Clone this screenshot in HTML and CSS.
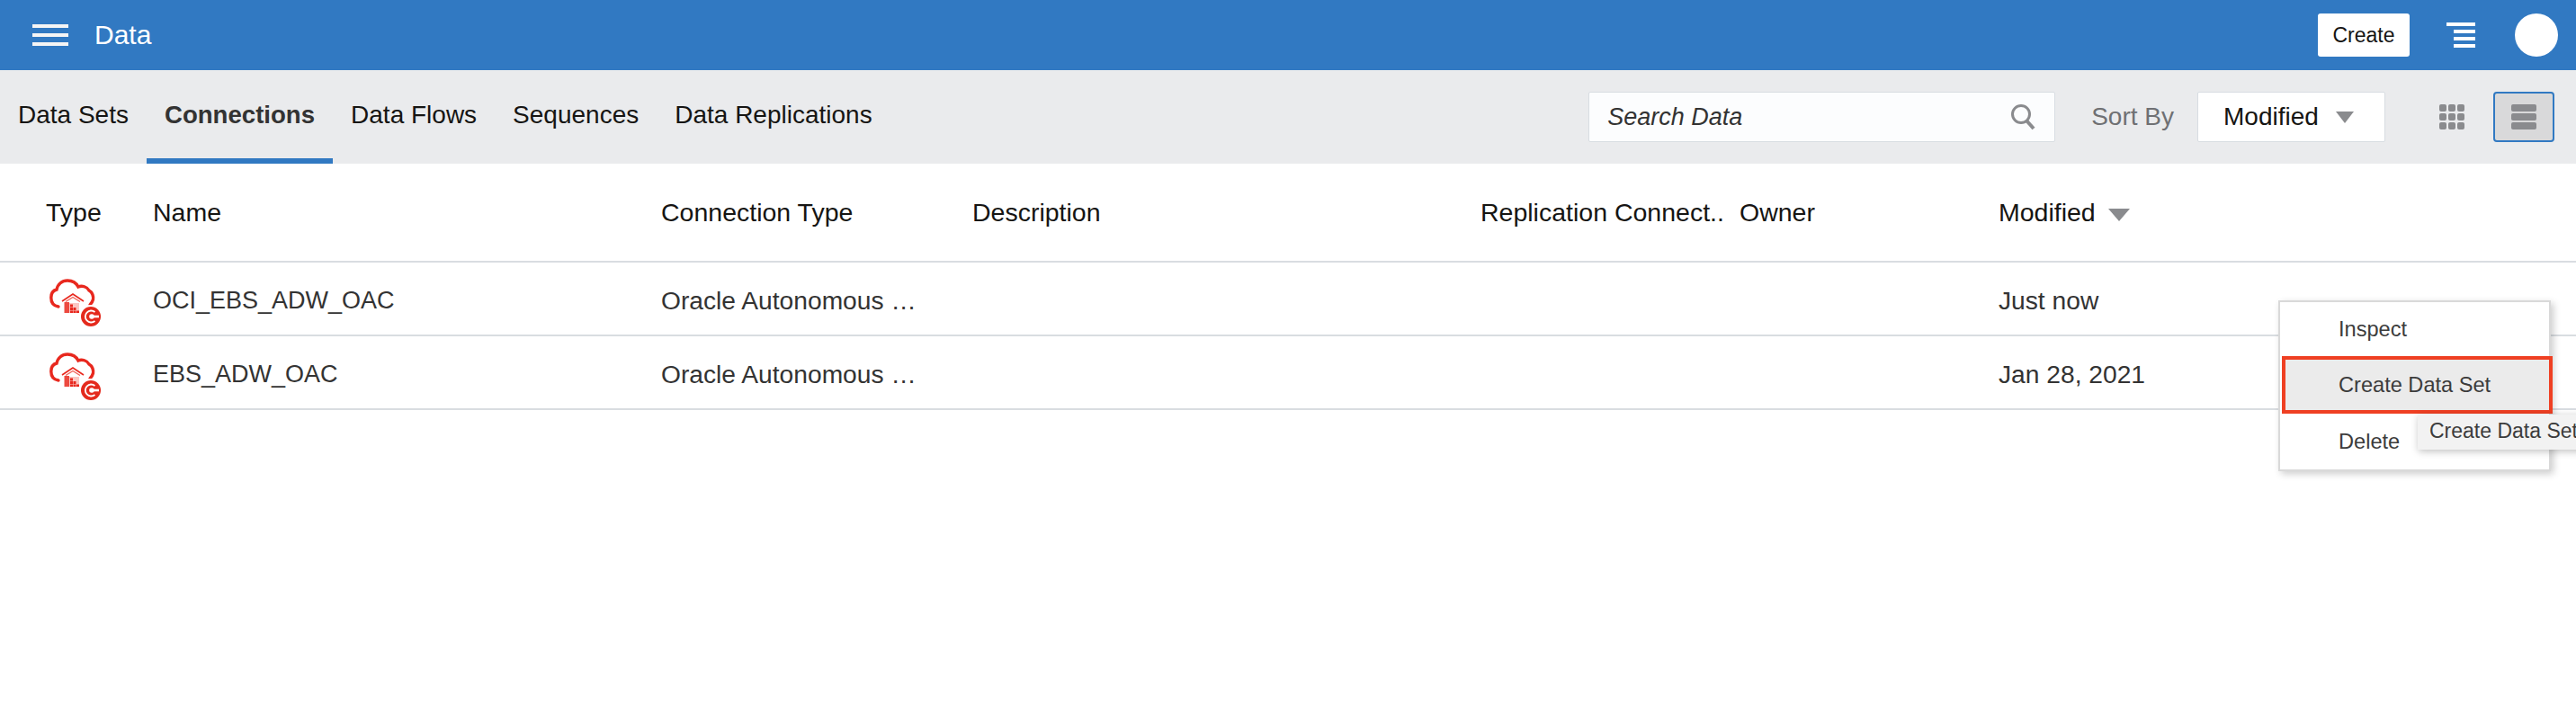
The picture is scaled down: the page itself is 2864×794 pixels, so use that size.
FILE: index.html
```html
<!DOCTYPE html>
<html>
<head>
  <title>Data</title>
  <link rel="stylesheet" href="styles.css">
</head>
<body>
  <svg class="defs" width="0" height="0">
    <symbol id="conn" viewBox="0 0 58 56">
      <path d="M10 31C4 30 1.800 26 1.800 21C1.800 16 4 13 8 12C9 6 14 2 20 2C26 2 30 5 32 9C36 7 42 9 44 13C48 15 49 20 48.500 23C48 25 47 27 45 29" fill="none" stroke="#e8281e" stroke-width="3.400" stroke-linecap="round"/>
      <path d="M14 25L26 17L38 25" fill="none" stroke="#e8281e" stroke-width="1.600"/>
      <path d="M18 25.500L26 20.500L34 25.500" fill="none" stroke="#f0635a" stroke-width="1.400"/>
      <path d="M16.500 26h5.500v12h-5.500Z" fill="#ec4a40"/>
      <path d="M22 27H33V38H22Z" fill="#fbc6c2"/>
      <path d="M23 28.500h3v3h-3ZM23 32h3v3h-3ZM23 35.500h3V38h-3ZM26.500 32h3v3h-3ZM26.500 35.500h3V38h-3ZM30 35.500h3V38h-3Z" fill="#e8281e"/>
      <circle cx="46" cy="42" r="13" fill="#fff"/>
      <circle cx="46" cy="42" r="11" fill="#e42a1d"/>
      <path d="M50.500 37A6.500 6.500 0 1 0 50.500 47" fill="none" stroke="#fff" stroke-width="1.800"/>
      <path d="M47 40.700h8v2.600h-8Z" fill="#fff"/>
      <circle cx="47" cy="42" r="2.800" fill="#fff"/>
    </symbol>
  </svg>

  <header class="topbar">
    <div class="burger"><span></span><span></span><span></span></div>
    <div class="app-title">Data</div>
    <button class="create-btn">Create</button>
    <div class="notif"><span></span><span></span><span></span><span></span></div>
    <div class="avatar"></div>
  </header>

  <nav class="toolbar">
    <div class="tabs">
      <a class="tab">Data Sets</a>
      <a class="tab active">Connections</a>
      <a class="tab">Data Flows</a>
      <a class="tab">Sequences</a>
      <a class="tab">Data Replications</a>
    </div>
    <div class="search">
      <span class="search-text">Search Data</span>
      <svg width="30" height="30" viewBox="0 0 30 30">
        <circle cx="13" cy="12" r="9.500" fill="none" stroke="#8a8b8e" stroke-width="3"/>
        <path d="M19 19l8 9" fill="none" stroke="#8a8b8e" stroke-width="4"/>
      </svg>
    </div>
    <span class="sort-label">Sort By</span>
    <div class="sort-select">
      <span>Modified</span>
      <i class="caret"></i>
    </div>
    <div class="view-btn first">
      <div class="grid-icon">
        <b></b><b></b><b></b><b></b><b></b><b></b><b></b><b></b><b></b>
      </div>
    </div>
    <div class="view-btn selected">
      <div class="list-icon"><b></b><b></b><b></b></div>
    </div>
  </nav>

  <div class="row head">
    <div>Type</div>
    <div>Name</div>
    <div>Connection Type</div>
    <div>Description</div>
    <div>Replication Connect..</div>
    <div>Owner</div>
    <div>Modified <i class="caret sort-caret"></i></div>
  </div>
  <div class="row">
    <div><svg class="conn-icon"><use href="#conn"/></svg></div>
    <div class="conn-name">OCI_EBS_ADW_OAC</div>
    <div>Oracle Autonomous …</div>
    <div></div>
    <div></div>
    <div></div>
    <div>Just now</div>
  </div>
  <div class="row">
    <div><svg class="conn-icon"><use href="#conn"/></svg></div>
    <div class="conn-name">EBS_ADW_OAC</div>
    <div>Oracle Autonomous …</div>
    <div></div>
    <div></div>
    <div></div>
    <div>Jan 28, 2021</div>
  </div>

  <div class="menu">
    <div class="menu-item">Inspect</div>
    <div class="menu-item current">Create Data Set</div>
    <div class="menu-item last">Delete</div>
  </div>
  <div class="tooltip">Create Data Set</div>
</body>
</html>
```

FILE: styles.css
```css
/* page */
html, body {
  margin: 0;
  height: 794px;
  overflow: hidden;
}

body {
  position: relative;
  background-color: #fff;
  color: #333;
  font-family: "Liberation Sans", Arial, sans-serif;
}

.defs {
  position: absolute;
}

/* blue bar */
.topbar {
  display: flex;
  align-items: center;
  height: 78px;
  background-color: #3179c2;
  color: #fff;
}

.burger {
  display: flex;
  flex-direction: column;
  gap: 6px;
  width: 40px;
  margin-left: 36px;
}

.burger span {
  height: 4px;
  background-color: #f5f5f5;
}

.app-title {
  margin-left: 29px;
  font-size: 30px;
}

.create-btn {
  width: 102px;
  height: 48px;
  margin-left: auto;
  padding: 0;
  border: none;
  border-radius: 3px;
  background-color: #fff;
  color: #161513;
  font-family: inherit;
  font-size: 23px;
}

.notif {
  display: flex;
  flex-direction: column;
  align-items: flex-end;
  gap: 4px;
  width: 32px;
  margin-left: 41px;
}

.notif span {
  width: 24px;
  height: 4px;
  background-color: #fff;
}

.notif span:first-child {
  width: 32px;
}

.avatar {
  width: 48px;
  height: 48px;
  margin-left: 44px;
  margin-right: 20px;
  border-radius: 50%;
  background-color: #fff;
}

/* tabs and search */
.toolbar {
  display: flex;
  align-items: center;
  height: 104px;
  background-color: #eaebed;
}

.tabs {
  display: flex;
  align-self: stretch;
  margin-right: auto;
}

.tab {
  display: flex;
  align-items: center;
  box-sizing: border-box;
  padding: 2px 20px 0;
  border-bottom: 6px solid transparent;
  color: #161513;
  font-size: 28px;
}

.tab.active {
  border-bottom-color: #3179c2;
  color: #333;
  font-size: 27.600px;
  font-weight: bold;
}

.search {
  display: flex;
  align-items: center;
  justify-content: space-between;
  box-sizing: border-box;
  width: 519px;
  height: 56px;
  padding: 0 20px;
  border: 1px solid #d8dde2;
  border-radius: 2px;
  background-color: #fcfdfe;
}

.search-text {
  color: #333;
  font-size: 27px;
  font-style: italic;
}

.sort-label {
  margin-left: 40px;
  color: #6f7073;
  font-size: 28px;
}

.sort-select {
  display: flex;
  align-items: center;
  justify-content: space-between;
  box-sizing: border-box;
  width: 209px;
  height: 56px;
  margin-left: 26px;
  padding: 0 34px 0 28px;
  border: 1px solid #d8dde2;
  border-radius: 2px;
  background-color: #fff;
  color: #161513;
  font-size: 28px;
}

.caret {
  display: inline-block;
  width: 0;
  height: 0;
  border-top: 13px solid #8a8b8e;
  border-left: 10px solid transparent;
  border-right: 10px solid transparent;
}

.view-btn {
  display: flex;
  align-items: center;
  justify-content: center;
  box-sizing: border-box;
  width: 68px;
  height: 56px;
  margin-right: 24px;
}

.view-btn.first {
  margin-left: 40px;
  margin-right: 12px;
}

.view-btn.selected {
  border: 2px solid #3179c2;
  border-radius: 4px;
  background-color: #d9d9da;
}

.grid-icon {
  display: grid;
  grid-template-columns: repeat(3, 8px);
  grid-auto-rows: 8px;
  gap: 2px;
}

.grid-icon b {
  border-radius: 2px;
  background-color: #8a8b8e;
}

.list-icon {
  display: flex;
  flex-direction: column;
  gap: 2px;
}

.list-icon b {
  width: 28px;
  height: 8px;
  border-radius: 2px;
  background-color: #8a8b8e;
}

/* table */
.row {
  display: grid;
  grid-template-columns: 170px 565px 346px 565px 288px 288px 1fr;
  align-items: center;
  box-sizing: border-box;
  height: 82px;
  padding-top: 4px;
  border-bottom: 2px solid #d9dde1;
  color: #333;
  font-size: 28.200px;
}

.row.head {
  height: 110px;
  padding-top: 0;
  color: #161513;
  font-size: 28.500px;
}

.row > div:first-child {
  padding-left: 51px;
}

.conn-name {
  font-size: 27px;
}

.conn-icon {
  display: block;
  width: 58px;
  height: 56px;
  margin-top: 8px;
  margin-left: 4px;
}

.sort-caret {
  margin-left: 6px;
  vertical-align: 0;
  border-top-width: 14px;
  border-left-width: 12px;
  border-right-width: 12px;
}

/* context menu */
.menu {
  position: absolute;
  left: 2533px;
  top: 334px;
  box-sizing: border-box;
  width: 303px;
  height: 190px;
  border: 2px solid #d9d9d9;
  background-color: #fff;
  box-shadow: 3px 3px 8px rgba(0, 0, 0, 0.2);
}

.menu-item {
  display: flex;
  align-items: center;
  box-sizing: border-box;
  height: 60px;
  padding-left: 65px;
  color: #3c3c3c;
  font-size: 23.600px;
}

.menu-item.current {
  width: 301px;
  height: 64px;
  margin-left: 2px;
  padding-left: 59px;
  border: 4px solid #ef4023;
  background-color: #ebebeb;
}

.menu-item.last {
  padding-top: 3px;
}

.tooltip {
  position: absolute;
  left: 2688px;
  top: 461px;
  box-sizing: border-box;
  width: 190px;
  height: 39px;
  padding-left: 13px;
  background-color: #f2f2f2;
  color: #3c3c3c;
  font-size: 23px;
  line-height: 37px;
  white-space: nowrap;
  box-shadow: 1px 2px 8px rgba(0, 0, 0, 0.25);
}
```
